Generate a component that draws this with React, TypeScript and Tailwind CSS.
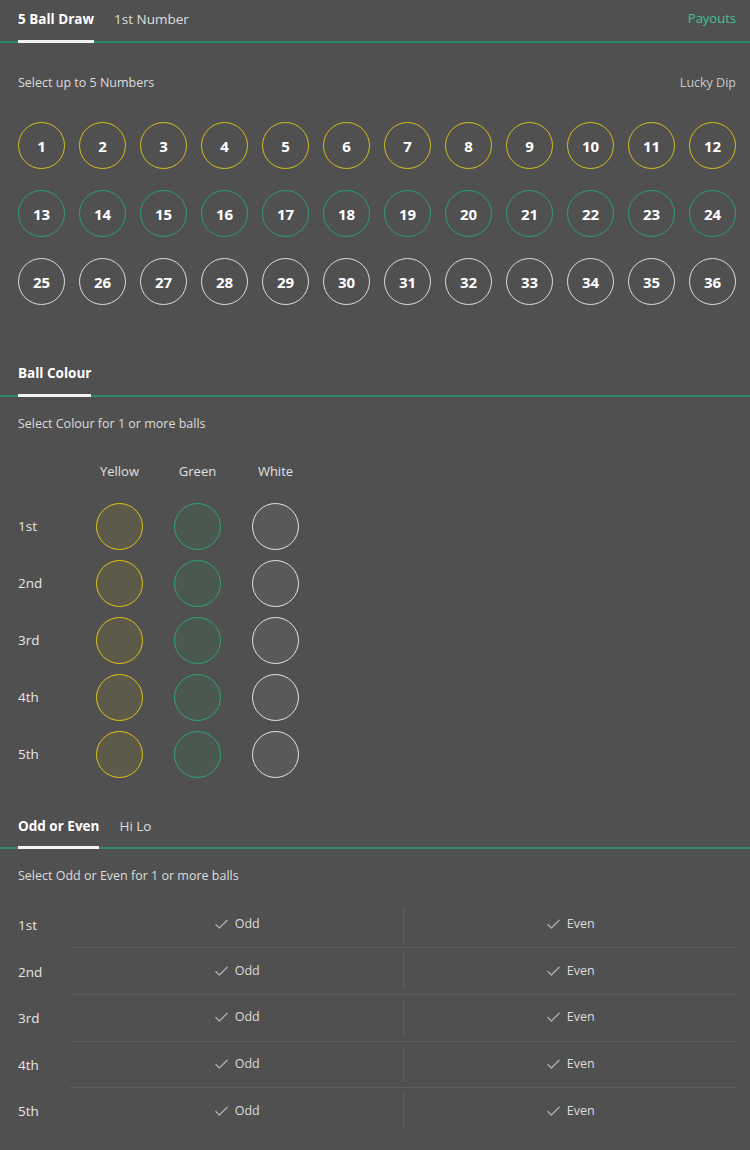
import { Check } from 'lucide-react'

const font = { fontFamily: '"Open Sans", "Liberation Sans", sans-serif' }

const rowColors = [
  'border-[#d4bf1c]',
  'border-[#2b9f77]',
  'border-[#dcdcdc]',
]

const ordinals = ['1st', '2nd', '3rd', '4th', '5th']

const Tabs = ({ items, right }: { items: string[]; right?: string }) => (
  <div className="flex items-end justify-between border-b-2 border-[#2f8a68] px-[18px]">
    <div className="flex gap-[20px]">
      {items.map((t, i) => (
        <div
          key={t}
          className={
            i === 0
              ? 'text-[13.5px] font-bold text-white pb-[10px] border-b-[3px] border-[#f2f2f2] -mb-[2px]'
              : 'text-[13.5px] text-[#dedede] pb-[13px] -mb-[2px]'
          }
        >
          {t}
        </div>
      ))}
    </div>
    {right && <div className="text-[13px] text-[#3fc394] pb-[12px] -mr-[4px]">{right}</div>}
  </div>
)

export default function App() {
  return (
    <div className="w-[750px] h-[1150px] bg-[#505050] text-[#e6e6e6] overflow-hidden" style={font}>
      {/* 5 ball draw */}
      <div className="pt-[9px]">
        <Tabs items={['5 Ball Draw', '1st Number']} right="Payouts" />
      </div>
      <div className="flex justify-between px-[18px] pt-[31px] text-[12.5px] text-[#dcdcdc]">
        <span>Select up to 5 Numbers</span>
        <span className="text-[#c8c8c8] -mr-[4px]">Lucky Dip</span>
      </div>
      <div className="flex flex-col gap-[21px] pl-[18px] pr-[14px] pt-[30px]">
        {[0, 1, 2].map((r) => (
          <div key={r} className="flex justify-between">
            {Array.from({ length: 12 }, (_, i) => r * 12 + i + 1).map((n) => (
              <div
                key={n}
                className={`w-[47px] h-[47px] rounded-full border-[1.5px] ${rowColors[r]} flex items-center justify-center text-[15px] font-bold text-white`}
              >
                {n}
              </div>
            ))}
          </div>
        ))}
      </div>

      {/* Ball colour */}
      <div className="pt-[58px]">
        <Tabs items={['Ball Colour']} />
      </div>
      <div className="px-[18px] pt-[18px] text-[12.5px] text-[#dcdcdc]">Select Colour for 1 or more balls</div>
      <div className="px-[18px] pt-[29px]">
        <div className="flex text-[13px] text-[#e0e0e0]">
          <div className="w-[78px]" />
          <div className="flex gap-[31px]">
            {['Yellow', 'Green', 'White'].map((c) => (
              <div key={c} className="w-[47px] text-center">
                {c}
              </div>
            ))}
          </div>
        </div>
        <div className="flex flex-col gap-[10px] pt-[21px]">
          {ordinals.map((o) => (
            <div key={o} className="flex items-center">
              <div className="w-[78px] text-[13.5px] text-[#e6e6e6]">{o}</div>
              <div className="flex gap-[31px]">
                <div className="w-[47px] h-[47px] rounded-full border-[1.5px] border-[#dcc514] bg-[#5e5a4a]" />
                <div className="w-[47px] h-[47px] rounded-full border-[1.5px] border-[#2da57b] bg-[#4b5850]" />
                <div className="w-[47px] h-[47px] rounded-full border-[1.5px] border-[#e4e4e4] bg-[#595959]" />
              </div>
            </div>
          ))}
        </div>
      </div>

      {/* Odd or even */}
      <div className="pt-[38px]">
        <Tabs items={['Odd or Even', 'Hi Lo']} />
      </div>
      <div className="px-[18px] pt-[18px] text-[12.5px] text-[#dcdcdc]">Select Odd or Even for 1 or more balls</div>
      <div className="pl-[18px] pr-[14px] pt-[16px]">
        {ordinals.map((o, i) => (
          <div key={o} className="flex items-center h-[46.6px]">
            <div className="w-[52px] text-[13.5px] text-[#e6e6e6]">{o}</div>
            <div
              className={`flex-1 h-full flex items-center ${i < 4 ? 'border-b border-[#5f5f5f]' : ''}`}
            >
              <div className="flex-1 flex items-center justify-center gap-[5px] text-[12.5px] text-[#dcdcdc]">
                <Check size={17} strokeWidth={1.7} className="text-[#b0b0b0]" />
                Odd
              </div>
              <div className="w-px h-[36px] bg-[#5f5f5f]" />
              <div className="flex-1 flex items-center justify-center gap-[5px] text-[12.5px] text-[#dcdcdc]">
                <Check size={17} strokeWidth={1.7} className="text-[#b0b0b0]" />
                Even
              </div>
            </div>
          </div>
        ))}
      </div>
    </div>
  )
}
